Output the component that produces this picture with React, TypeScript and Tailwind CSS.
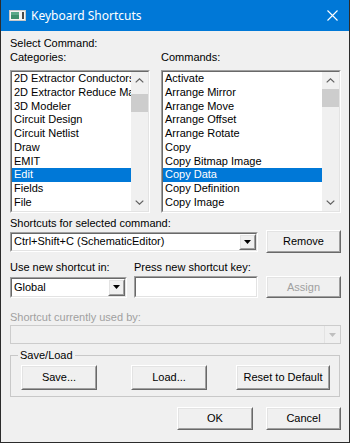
import React from "react";

const font = "font-['Liberation_Sans',Arial,sans-serif]";

function Sunken({ className = "", inner = "", children }: { className?: string; inner?: string; children?: React.ReactNode }) {
  return (
    <div className={`border border-t-[#a0a0a0] border-l-[#a0a0a0] border-b-white border-r-white ${className}`}>
      <div className={`h-full border border-t-[#696969] border-l-[#696969] border-b-[#e3e3e3] border-r-[#e3e3e3] ${inner}`}>
        {children}
      </div>
    </div>
  );
}

function Raised({ className = "", inner = "", children }: { className?: string; inner?: string; children?: React.ReactNode }) {
  return (
    <div className={`border border-t-white border-l-white border-b-[#696969] border-r-[#696969] bg-[#f0f0f0] ${className}`}>
      <div className={`h-full border border-t-[#e3e3e3] border-l-[#e3e3e3] border-b-[#a0a0a0] border-r-[#a0a0a0] flex items-center justify-center ${inner}`}>
        {children}
      </div>
    </div>
  );
}

function Button({ label, className = "", disabled = false }: { label: string; className?: string; disabled?: boolean }) {
  return (
    <Raised className={className}>
      <span className={`text-[11px] leading-none ${disabled ? "text-[#a0a0a0]" : "text-black"}`}>{label}</span>
    </Raised>
  );
}

function Chevron({ up }: { up?: boolean }) {
  return (
    <svg width="9" height="5" viewBox="0 0 9 5">
      <path d={up ? "M0.7 4.4 L4.5 0.8 L8.3 4.4" : "M0.7 0.6 L4.5 4.2 L8.3 0.6"} fill="none" stroke="#606060" strokeWidth="1.2" />
    </svg>
  );
}

function Triangle({ color = "#000" }: { color?: string }) {
  return (
    <svg width="7" height="4" viewBox="0 0 7 4">
      <path d="M0 0 H7 L3.5 4 Z" fill={color} />
    </svg>
  );
}

function ListBox({ items, selected, thumbOffset, className = "" }: { items: string[]; selected: string; thumbOffset: string; className?: string }) {
  return (
    <Sunken className={`h-[143px] ${className}`} inner="flex bg-white">
      <div className="flex-1 min-w-0 overflow-hidden">
        {items.map((it) => (
          <div
            key={it}
            className={`h-[13.75px] leading-[13.75px] pl-[2px] whitespace-nowrap text-[11px] ${it === selected ? "bg-[#0078d7] text-white" : "text-black"}`}
          >
            {it}
          </div>
        ))}
      </div>
      <div className="w-[17px] bg-[#f0f0f0] flex flex-col">
        <div className="h-[17px] flex items-center justify-center">
          <Chevron up />
        </div>
        <div className="flex-1">
          <div className={`h-[18px] bg-[#cdcdcd] ${thumbOffset}`} />
        </div>
        <div className="h-[17px] flex items-center justify-center">
          <Chevron />
        </div>
      </div>
    </Sunken>
  );
}

export default function App() {
  const categories = [
    "2D Extractor Conductors",
    "2D Extractor Reduce Matrix",
    "3D Modeler",
    "Circuit Design",
    "Circuit Netlist",
    "Draw",
    "EMIT",
    "Edit",
    "Fields",
    "File",
  ];
  const commands = [
    "Activate",
    "Arrange Mirror",
    "Arrange Move",
    "Arrange Offset",
    "Arrange Rotate",
    "Copy",
    "Copy Bitmap Image",
    "Copy Data",
    "Copy Definition",
    "Copy Image",
  ];

  return (
    <div className={`w-[350px] h-[443px] bg-[#f0f0f0] border-x border-b border-[#2b2b2b] flex flex-col text-[11px] text-black ${font}`}>
      {/* Title bar */}
      <div className="h-[31px] bg-[#0078d7] flex items-center pl-[8px] pr-[11px] shrink-0">
        <svg width="17" height="11" viewBox="0 0 17 11" className="mt-[-1px]">
          <rect x="0.5" y="0.5" width="16" height="10" fill="#f4f4f4" stroke="#c8c8c8" />
          <rect x="2" y="2" width="8" height="7" fill="#3d8f6e" />
          <rect x="2" y="2" width="8" height="3" fill="#5aa88a" />
          <rect x="13" y="2" width="2" height="7" fill="#4a4a4a" />
        </svg>
        <span className="ml-[5px] text-white text-[12px] font-['Noto_Sans',sans-serif] leading-none">Keyboard Shortcuts</span>
        <div className="flex-1" />
        <svg width="11" height="11" viewBox="0 0 11 11">
          <path d="M0.5 0.5 L10.5 10.5 M10.5 0.5 L0.5 10.5" stroke="#ffffff" strokeWidth="1.1" />
        </svg>
      </div>

      <div className="pl-[9px] pr-[8px] flex flex-col">
        <div className="mt-[5px] leading-[14px]">Select Command:</div>

        <div className="flex gap-[11px]">
          <div className="w-[140px] flex flex-col">
            <div className="leading-[14px]">Categories:</div>
            <ListBox items={categories} selected="Edit" thumbOffset="mt-[5px]" className="mt-[6px]" />
          </div>
          <div className="flex-1 flex flex-col">
            <div className="leading-[14px]">Commands:</div>
            <ListBox items={commands} selected="Copy Data" thumbOffset="mt-0" className="mt-[6px]" />
          </div>
        </div>

        <div className="mt-[3px] leading-[14px]">Shortcuts for selected command:</div>
        <div className="flex items-center h-[23px]">
          <Sunken className="w-[248px] h-[20px]" inner="bg-white flex items-center">
            <span className="flex-1 pl-[2px] whitespace-nowrap">Ctrl+Shift+C (SchematicEditor)</span>
            <Raised className="w-[17px] h-full">
              <Triangle />
            </Raised>
          </Sunken>
          <div className="flex-1" />
          <Button label="Remove" className="w-[75px] h-[23px]" />
        </div>

        <div className="mt-[7px] flex leading-[14px]">
          <span className="w-[124px]">Use new shortcut in:</span>
          <span>Press new shortcut key:</span>
        </div>
        <div className="mt-[2px] flex items-center h-[22px]">
          <Sunken className="w-[117px] h-[21px]" inner="bg-white flex items-center">
            <span className="flex-1 pl-[2px]">Global</span>
            <Raised className="w-[17px] h-full">
              <Triangle />
            </Raised>
          </Sunken>
          <Sunken className="ml-[7px] w-[124px] h-[22px]" inner="bg-white" />
          <div className="flex-1" />
          <Button label="Assign" disabled className="w-[75px] h-[22px]" />
        </div>

        <div className="mt-[12px] leading-[14px] text-[#a0a0a0]">Shortcut currently used by:</div>
        <div className="mt-[1px] h-[19px] border border-[#cccccc] bg-[#f0f0f0] flex items-center justify-end">
          <div className="w-[16px] h-full border-l border-[#e3e3e3] flex items-center justify-center">
            <Triangle color="#bfbfbf" />
          </div>
        </div>

        <fieldset className="mt-[4px] mr-[1px] border border-[#c8c8c8] px-0 pb-[6px]">
          <legend className="ml-[7px] px-[2px] leading-[14px]">Save/Load</legend>
          <div className="mt-[3px] pl-[10px] pr-[9px] flex items-center">
            <Button label="Save..." className="w-[76px] h-[25px]" />
            <Button label="Load..." className="ml-[34px] w-[76px] h-[25px]" />
            <div className="flex-1" />
            <Button label="Reset to Default" className="w-[94px] h-[25px]" />
          </div>
        </fieldset>

        <div className="mt-[10px] flex justify-end gap-[13px]">
          <Button label="OK" className="w-[76px] h-[23px]" />
          <Button label="Cancel" className="w-[75px] h-[23px]" />
        </div>
      </div>
    </div>
  );
}
